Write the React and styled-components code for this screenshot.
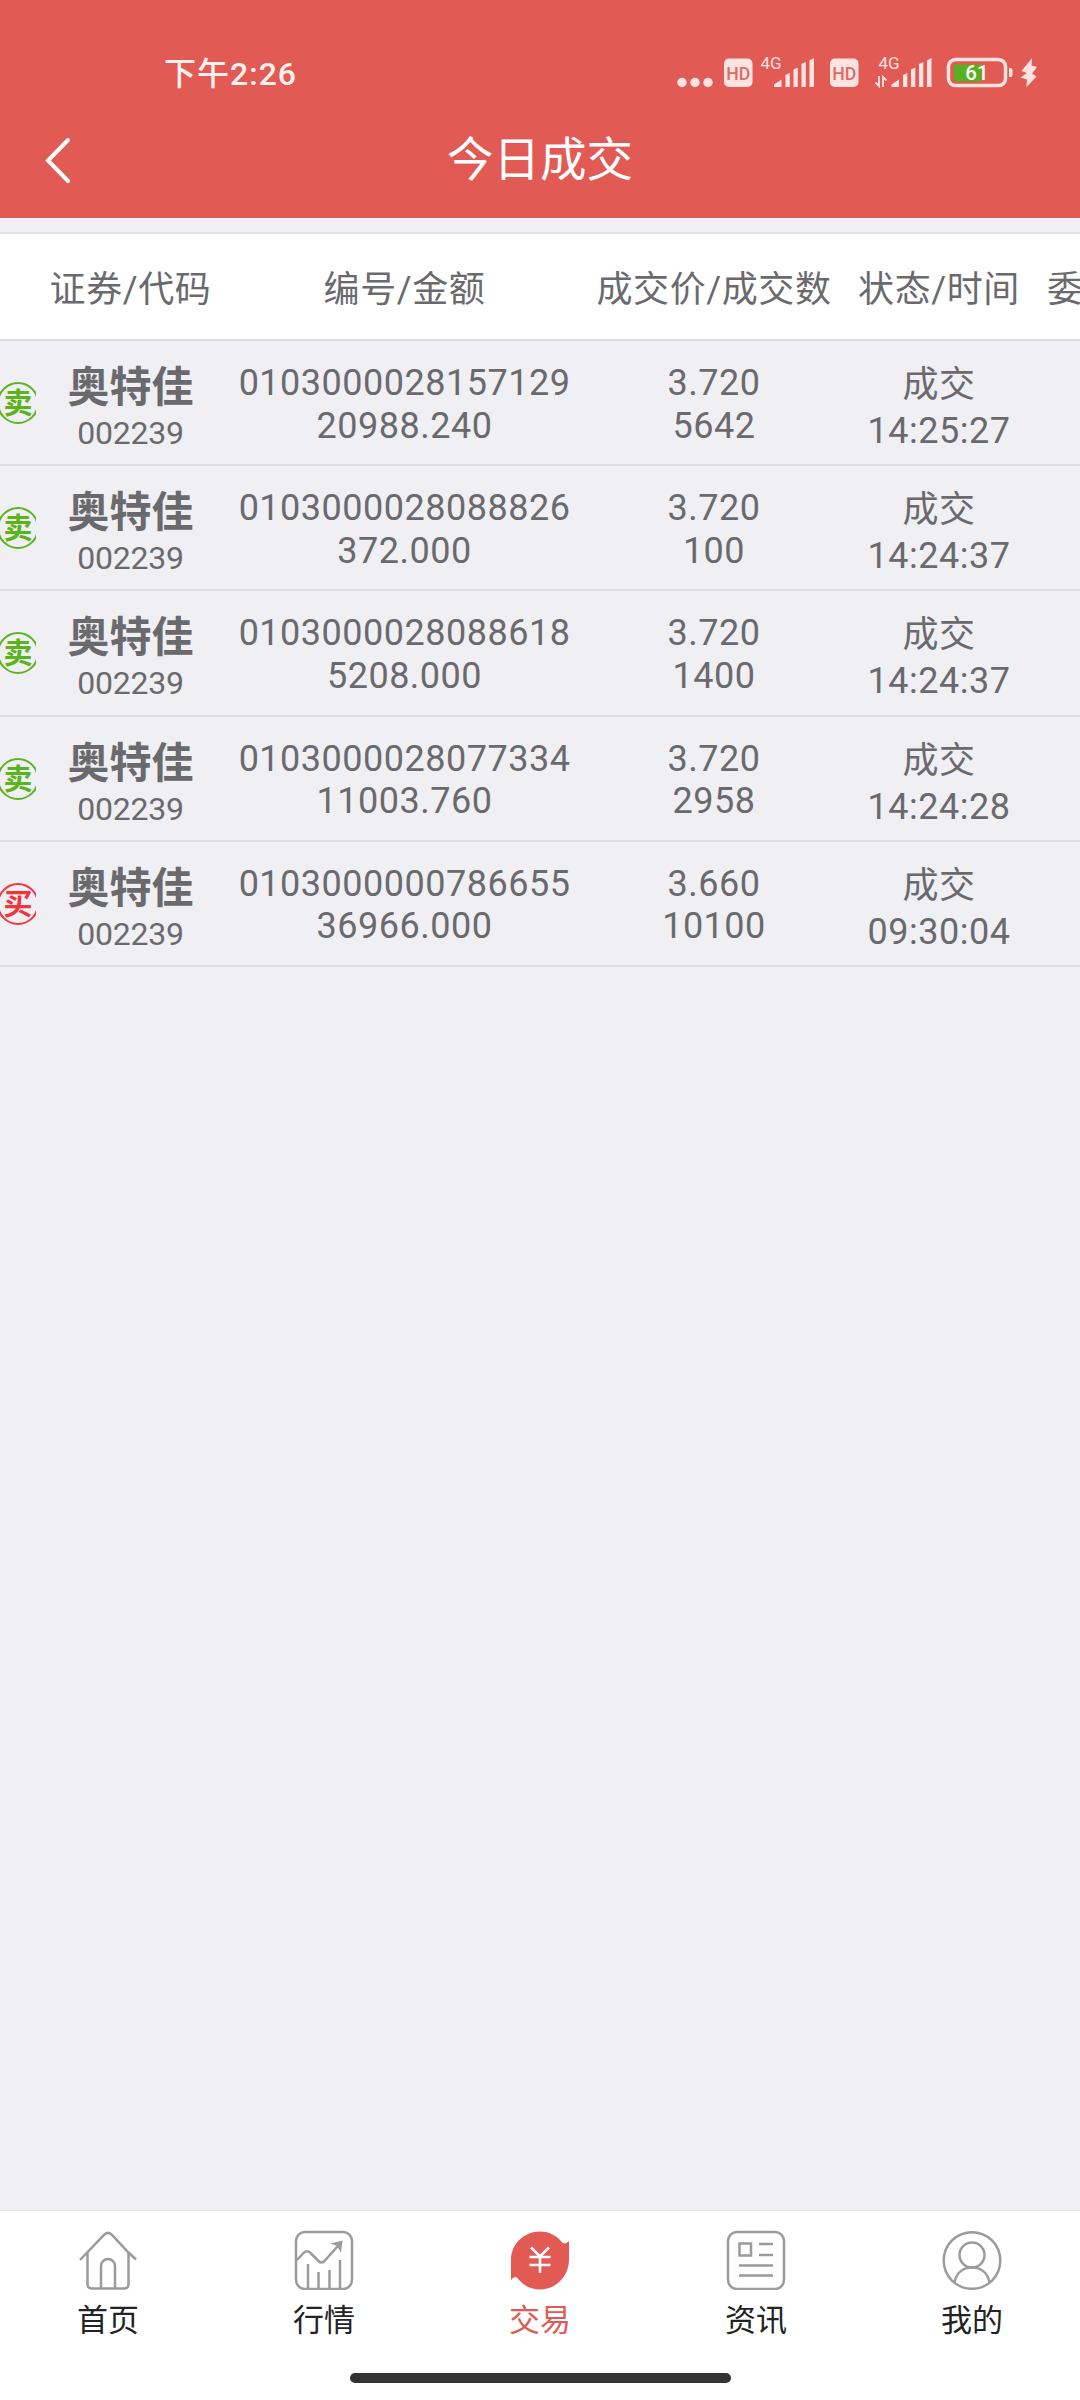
import React from 'react';
import styled, { createGlobalStyle } from 'styled-components';

const RED = '#e15a54';
const PAGE_BG = '#efeff4';
const TEXT_GRAY = '#6a6a6e';
const LINE_COLOR = '#dcdce1';
const SELL_GREEN = '#5cb31c';
const BUY_RED = '#f0353d';
const STATUS_TINT = '#ffe3e1';
const ICON_GRAY = '#9b9b9b';

const COLUMNS = '36px 189px 359px 260px 190px 46px';

const GlobalStyle = createGlobalStyle`
  * {
    box-sizing: border-box;
  }
  body {
    margin: 0;
    background: ${PAGE_BG};
    font-family: Roboto, 'Noto Sans CJK SC', sans-serif;
  }
`;

const Screen = styled.div`
  width: 1080px;
  height: 2400px;
  display: flex;
  flex-direction: column;
  overflow: hidden;
  background: ${PAGE_BG};
`;

const Header = styled.header`
  height: 218px;
  background: ${RED};
  color: #fff;
`;

const StatusBar = styled.div`
  height: 112px;
  padding: 39px 40px 0 164px;
  display: flex;
  justify-content: space-between;
  align-items: flex-start;
`;

const Clock = styled.div`
  font-size: 32px;
  line-height: 70px;
  font-weight: 500;
  letter-spacing: 1px;
  color: #fff1ee;
`;

const StatusIconArt = styled.svg`
  width: 370px;
  height: 50px;
  margin-top: 12px;
  fill: ${STATUS_TINT};
`;

const TitleBar = styled.div`
  height: 96px;
  padding: 0 43px;
  display: grid;
  grid-template-columns: 30px 1fr 30px;
  align-items: center;
`;

const BackArrow = styled.svg`
  width: 30px;
  height: 50px;
  fill: none;
  stroke: #fff;
  stroke-width: 4;
  stroke-linecap: round;
`;

const Title = styled.h1`
  margin: 0;
  font-size: 46.5px;
  line-height: 60px;
  font-weight: 400;
  text-align: center;
`;

const TableHead = styled.div`
  height: 109px;
  margin-top: 14px;
  padding-top: 6px;
  border-top: 2px solid #e3e3e6;
  border-bottom: 2px solid ${LINE_COLOR};
  display: grid;
  grid-template-columns: ${COLUMNS};
  align-items: center;
  background: #fff;
`;

const HeadCell = styled.div`
  padding-left: ${(props) => props.$indent || 0}px;
  font-size: 36px;
  line-height: 50px;
  letter-spacing: 0.6px;
  text-align: center;
  white-space: nowrap;
  color: ${TEXT_GRAY};
`;

const Row = styled.div`
  height: 125.2px;
  border-bottom: 2px solid ${LINE_COLOR};
  display: grid;
  grid-template-columns: ${COLUMNS};
  color: ${TEXT_GRAY};
`;

const Cell = styled.div`
  display: flex;
  flex-direction: column;
  align-items: center;
  padding-top: ${(props) => props.$top}px;
`;

const Value = styled.div`
  font-size: 36px;
  line-height: ${(props) => props.$line || 42.5}px;
  letter-spacing: 0.5px;
`;

const StockName = styled.div`
  font-size: 42px;
  line-height: 50px;
  font-weight: 700;
`;

const StockCode = styled.div`
  font-size: 32px;
  line-height: 40px;
  letter-spacing: -0.2px;
`;

const Mark = styled.svg`
  width: 36px;
  height: 42px;
  margin-top: 41px;
`;

const Spacer = styled.div`
  flex: 1;
`;

const TabBar = styled.nav`
  height: 190px;
  border-top: 1px solid #e4e4e6;
  display: flex;
  flex-direction: column;
  align-items: center;
  background: #fff;
`;

const Tabs = styled.div`
  width: 100%;
  height: 162px;
  display: grid;
  grid-template-columns: repeat(5, 1fr);
`;

const Tab = styled.div`
  padding-top: 19px;
  display: flex;
  flex-direction: column;
  align-items: center;
  color: ${(props) => (props.$active ? RED : '#232323')};
`;

const TabIcon = styled.svg`
  width: 60px;
  height: 60px;
  fill: none;
  stroke: ${ICON_GRAY};
  stroke-width: 2.5;
`;

const TabLabel = styled.div`
  margin-top: 9px;
  font-size: 31px;
  line-height: 44px;
`;

const HomeIndicator = styled.div`
  width: 381px;
  height: 10px;
  border-radius: 5px;
  background: #333;
`;

const trades = [
  { side: '卖', name: '奥特佳', code: '002239', id: '0103000028157129', amount: '20988.240', price: '3.720', count: '5642', time: '14:25:27' },
  { side: '卖', name: '奥特佳', code: '002239', id: '0103000028088826', amount: '372.000', price: '3.720', count: '100', time: '14:24:37' },
  { side: '卖', name: '奥特佳', code: '002239', id: '0103000028088618', amount: '5208.000', price: '3.720', count: '1400', time: '14:24:37' },
  { side: '卖', name: '奥特佳', code: '002239', id: '0103000028077334', amount: '11003.760', price: '3.720', count: '2958', time: '14:24:28' },
  { side: '买', name: '奥特佳', code: '002239', id: '0103000000786655', amount: '36966.000', price: '3.660', count: '10100', time: '09:30:04' },
];

const Signal = ({ x }) => (
  <g transform={`translate(${x} 0)`}>
    <path d="M0 36v-2.500l7.500-5v7.500z" />
    <path d="M11.500 24l4.300-2v14h-4.300z" />
    <path d="M19.500 18.500l4.300-2v19.500h-4.300z" />
    <path d="M27.500 13l4.300-2v25h-4.300z" />
    <path d="M35.500 9.500l4.500-2.500v29h-4.500z" />
  </g>
);

const HdBadge = ({ x }) => (
  <g transform={`translate(${x} 0)`}>
    <rect y="7.500" width="28.500" height="28.500" rx="5" />
    <text x="14.200" y="28.800" textAnchor="middle" fontSize="19" fontWeight="500" textLength="24" lengthAdjust="spacingAndGlyphs" fill="#dc6b66">
      HD
    </text>
  </g>
);

const StatusIcons = () => (
  <StatusIconArt viewBox="0 0 370 50">
    <circle cx="12" cy="31.500" r="4.700" />
    <circle cx="25" cy="31.500" r="4.700" />
    <circle cx="38" cy="31.500" r="4.700" />
    <HdBadge x={54} />
    <text x="90.500" y="17.500" fontSize="17">4G</text>
    <Signal x={104} />
    <HdBadge x={160} />
    <text x="208.500" y="17.500" fontSize="17">4G</text>
    <path d="M209 25v10l-3.500-3.500M213 36v-10l3.500 3.500" fill="none" stroke={STATUS_TINT} strokeWidth="1.800" />
    <Signal x={221.500} />
    <rect x="278.500" y="8.500" width="57" height="26" rx="7" fill="none" stroke={STATUS_TINT} strokeWidth="3.500" />
    <path d="M284 13.500h27.500v17h-27.500z" fill="#57b01e" />
    <path d="M339 17h1.500a2 2 0 0 1 2 2v5a2 2 0 0 1-2 2h-1.500z" />
    <text x="307" y="29" textAnchor="middle" fontSize="20.500" fontWeight="500" fill="#fff">61</text>
    <path d="M362 7l-10.500 13 5.500 2-6.500 4.500 6.500 2-.500 7.500 10-10.500-4.500-3 5-6.500-5.500-1.500z" />
  </StatusIconArt>
);

const SideMark = ({ side }) => {
  const color = side === '买' ? BUY_RED : SELL_GREEN;
  return (
    <Mark viewBox="0 0 36 42">
      <circle cx="18" cy="21" r="20" fill="none" stroke={color} strokeWidth="2" />
      <text x="18" y="31.500" textAnchor="middle" fontSize="29" fontWeight="700" fill={color}>
        {side}
      </text>
    </Mark>
  );
};

const TradeRow = ({ trade }) => (
  <Row>
    <SideMark side={trade.side} />
    <Cell $top={22}>
      <StockName>{trade.name}</StockName>
      <StockCode>{trade.code}</StockCode>
    </Cell>
    <Cell $top={21}>
      <Value>{trade.id}</Value>
      <Value>{trade.amount}</Value>
    </Cell>
    <Cell $top={21}>
      <Value>{trade.price}</Value>
      <Value>{trade.count}</Value>
    </Cell>
    <Cell $top={21}>
      <Value $line={46}>成交</Value>
      <Value $line={46}>{trade.time}</Value>
    </Cell>
  </Row>
);

const HomeIcon = () => (
  <TabIcon viewBox="0 0 60 60">
    <path d="M2 30L26.500 4.500q3.500-3.200 7 0L51 23l7 6.500" />
    <path d="M9.500 22v32q0 4.500 4.500 4.500h32q4.500 0 4.500-4.500V22" />
    <path d="M23 58V36a7 7 0 0 1 14 0v22" />
  </TabIcon>
);

const MarketIcon = () => (
  <TabIcon viewBox="0 0 60 60">
    <rect x="2" y="2" width="56" height="57" rx="9" />
    <path d="M3 30l6.500-7q3.500-3.500 7 0l8 8q3 3 6 0L47 12.500" />
    <path d="M48.500 10.500l-12 3 6.500 2.500 4 6.500z" fill={ICON_GRAY} stroke="none" />
    <path d="M14 34v24.500M24.500 42v16.500M35.500 40v18.500M46 30v28.500" />
  </TabIcon>
);

const TradeIcon = () => (
  <TabIcon viewBox="0 0 60 60">
    <path
      d="M1 50V30C1 14 14 1.500 30 1.500c9.500 0 17.500 4.500 22.500 11.500q3.500 1.500 6.500-2v19c0 16-13 29.500-29 29.500-10 0-18-5-23-12q-3-1.500-6 2.500z"
      fill={RED}
      stroke="none"
    />
    <path d="M21 17.500l9 9 9-9M19.500 27h21M19.500 35h21M30 27v16" stroke="#fff" strokeWidth="2.600" />
  </TabIcon>
);

const NewsIcon = () => (
  <TabIcon viewBox="0 0 60 60">
    <rect x="2" y="2" width="56" height="57" rx="9" />
    <path d="M13.500 13.500h11.500v12h-11.500zM33 14h14M33 25h14M13 35.500h34M13 45.500h34" />
  </TabIcon>
);

const MineIcon = () => (
  <TabIcon viewBox="0 0 60 60">
    <circle cx="30" cy="30.500" r="28.300" />
    <circle cx="30" cy="25" r="12.500" />
    <path d="M12.500 52C14.500 43 21 37.500 30 37.500S45.500 43 47.500 52" />
  </TabIcon>
);

const tabs = [
  { label: '首页', Icon: HomeIcon },
  { label: '行情', Icon: MarketIcon },
  { label: '交易', Icon: TradeIcon, active: true },
  { label: '资讯', Icon: NewsIcon },
  { label: '我的', Icon: MineIcon },
];

export default function App() {
  return (
    <Screen>
      <GlobalStyle />
      <Header>
        <StatusBar>
          <Clock>下午2:26</Clock>
          <StatusIcons />
        </StatusBar>
        <TitleBar>
          <BackArrow viewBox="0 0 30 50">
            <path d="M25 5L5 25.500 25 46" />
          </BackArrow>
          <Title>今日成交</Title>
        </TitleBar>
      </Header>
      <TableHead>
        <span />
        <HeadCell>证券/代码</HeadCell>
        <HeadCell>编号/金额</HeadCell>
        <HeadCell>成交价/成交数</HeadCell>
        <HeadCell>状态/时间</HeadCell>
        <HeadCell $indent={13}>委</HeadCell>
      </TableHead>
      {trades.map((trade) => (
        <TradeRow key={trade.id} trade={trade} />
      ))}
      <Spacer />
      <TabBar>
        <Tabs>
          {tabs.map(({ label, Icon, active }) => (
            <Tab key={label} $active={active}>
              <Icon />
              <TabLabel>{label}</TabLabel>
            </Tab>
          ))}
        </Tabs>
        <HomeIndicator />
      </TabBar>
    </Screen>
  );
}
